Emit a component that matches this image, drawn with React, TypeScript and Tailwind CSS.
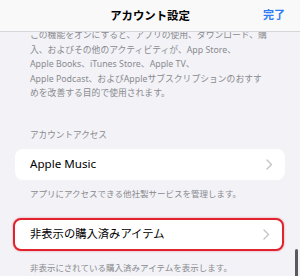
import React from 'react';

const font = { fontFamily: '"Noto Sans", "Noto Sans CJK JP", sans-serif' };

function Chevron() {
  return (
    <svg width="7" height="11" viewBox="0 0 7 11" className="shrink-0">
      <polyline points="1,1 5.5,5.5 1,10" fill="none" stroke="#c4c4c8" strokeWidth="1.4" strokeLinecap="round" strokeLinejoin="round" />
    </svg>
  );
}

export default function App() {
  return (
    <div className="relative w-[300px] h-[276px] overflow-hidden bg-[#f2f2f7]" style={font}>
      {/* Nav bar */}
      <div className="sticky top-0 z-10 h-8 flex items-center justify-center bg-[#f9f9fa] border-b border-[#d6d6da]">
        <span className="text-[11.4px] font-semibold text-black">アカウント設定</span>
        <span className="absolute right-[15px] text-[11px] font-semibold text-[#2d7cf6]">完了</span>
      </div>

      <div className="-mt-[4px]">
        <p className="px-[30px] text-[8.8px] leading-[14.5px] text-[#8a8a8e] whitespace-nowrap">
          この機能をオンにすると、アプリの使用、ダウンロード、購<br />
          入、およびその他のアクティビティが、App Store、<br />
          Apple Books、iTunes Store、Apple TV、<br />
          Apple Podcast、およびAppleサブスクリプションのおすす<br />
          めを改善する目的で使用されます。
        </p>

        <p className="mt-[27px] px-[30px] text-[8.6px] leading-[14px] text-[#8a8a8e]">アカウントアクセス</p>

        <div className="mt-[7px] mx-[15px] h-[31px] rounded-[8px] bg-white flex items-center justify-between pl-[15px] pr-[12px]">
          <span className="text-[11.6px] text-black">Apple Music</span>
          <Chevron />
        </div>

        <p className="mt-[7px] px-[30px] text-[8.5px] leading-[14px] text-[#8a8a8e]">アプリにアクセスできる他社製サービスを管理します。</p>

        <div className="mt-[17px] ml-[13px] w-[271px] h-[33px] rounded-[8px] bg-white border-2 border-[#e0232d] shadow-[0_0_2px_rgba(224,35,45,0.5)] flex items-center justify-between pl-[15px] pr-[12px]">
          <span className="text-[11.3px] text-black">非表示の購入済みアイテム</span>
          <Chevron />
        </div>

        <p className="mt-[10px] px-[30px] text-[8.5px] leading-[14px] text-[#8a8a8e]">非表示にされている購入済みアイテムを表示します。</p>
      </div>

      {/* scroll indicator */}
      <div className="absolute left-[295px] top-[249px] w-[3px] h-[30px] rounded-full bg-[#5a5a5e]" />
    </div>
  );
}
